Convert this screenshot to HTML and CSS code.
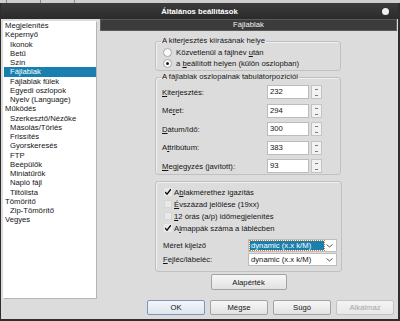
FILE: index.html
```html
<!DOCTYPE html>
<html lang="hu">

<head>
    <meta charset="UTF-8">
    <meta name="viewport" content="width=device-width, initial-scale=1.0">
    <title>Általános beállítások</title>
    <link rel="stylesheet" href="styles.css">
</head>

<body>
    <div class="strip"><span></span><span></span><span></span></div>
    <div class="window">
        <div class="titlebar">
            <span class="title">Általános beállítások</span>
            <span class="close"></span>
        </div>
        <div class="main">
            <ul class="tree">
                <li>Megjelenítés</li>
                <li>Képernyő</li>
                <li class="sub">Ikonok</li>
                <li class="sub">Betű</li>
                <li class="sub">Szín</li>
                <li class="sub on">Fájlablak</li>
                <li class="sub">Fájlablak fülek</li>
                <li class="sub">Egyedi oszlopok</li>
                <li class="sub">Nyelv (Language)</li>
                <li>Működés</li>
                <li class="sub">Szerkesztő/Nézőke</li>
                <li class="sub">Másolás/Törlés</li>
                <li class="sub">Frissítés</li>
                <li class="sub">Gyorskeresés</li>
                <li class="sub">FTP</li>
                <li class="sub">Beépülők</li>
                <li class="sub">Miniatűrök</li>
                <li class="sub">Napló fájl</li>
                <li class="sub">Tiltólista</li>
                <li>Tömörítő</li>
                <li class="sub">Zip-Tömörítő</li>
                <li>Vegyes</li>
            </ul>

            <div class="pane">
                <div class="pane-head">Fájlablak</div>

                <fieldset class="group g1">
                    <legend>A kiterjesztés kiírásának helye</legend>
                    <div class="radio"><span class="dot"></span><span>Közvetlenül a fájlnév <u>u</u>tán</span></div>
                    <div class="radio"><span class="dot on"></span><span>a <u>b</u>eállított helyen (külön oszlopban)</span></div>
                </fieldset>

                <fieldset class="group g2">
                    <legend>A fájlablak oszlopainak tabulátorpozíciói</legend>
                    <div class="field"><span class="label"><u>K</u>iterjesztés:</span><span class="input">232</span><span class="spin"></span></div>
                    <div class="field"><span class="label">Mé<u>r</u>et:</span><span class="input">294</span><span class="spin"></span></div>
                    <div class="field"><span class="label"><u>D</u>átum/Idő:</span><span class="input">300</span><span class="spin"></span></div>
                    <div class="field"><span class="label">A<u>t</u>tribútum:</span><span class="input">383</span><span class="spin"></span></div>
                    <div class="field"><span class="label"><u>M</u>egjegyzés (javított):</span><span class="input">93</span><span class="spin"></span></div>
                </fieldset>

                <fieldset class="group g3">
                    <div class="check"><span class="box on"></span><span>A<u>b</u>lakmérethez igazítás</span></div>
                    <div class="check"><span class="box"></span><span><u>É</u>vszázad jelölése (19xx)</span></div>
                    <div class="check"><span class="box"></span><span><u>1</u>2 órás (a/p) időmegjelenítés</span></div>
                    <div class="check"><span class="box on"></span><span>A<u>l</u>mappák száma a láblécben</span></div>
                    <div class="select-row first"><span class="slabel">Méret kijelző</span><span class="select focus"><span class="value">dynamic (x.x k/M)</span></span></div>
                    <div class="select-row"><span class="slabel"><u>F</u>ejléc/lábeléc:</span><span class="select"><span class="value">dynamic (x.x k/M)</span></span></div>
                </fieldset>

                <div class="defaults"><button class="btn wide">Alapérték</button></div>

                <div class="actions">
                    <button class="btn default">OK</button>
                    <button class="btn">Mégse</button>
                    <button class="btn">Súgó</button>
                    <button class="btn" disabled>Alkalmaz</button>
                </div>
            </div>
        </div>
    </div>
</body>

</html>
```

FILE: styles.css
```css
* {
    margin: 0;
    padding: 0;
    box-sizing: border-box;
}

body {
    width: 400px;
    height: 321px;
    overflow: hidden;
    background: #dcdcdc;
    color: #141414;
    font-family: 'Liberation Sans', Arial, sans-serif;
    font-size: 7.7px;
}

u {
    text-decoration-thickness: 1px;
}

.strip {
    height: 3px;
    display: flex;
    gap: 2px;
    background: #cfcfcf;
}
.strip span {
    width: 26px;
    border-left: 1px solid #8a8a8a;
    margin-left: 6px;
}

.window {
    height: 318px;
    display: flex;
    flex-direction: column;
    border: solid #2e2e2e;
    border-width: 0 2px 2px 1px;
}

.titlebar {
    height: 16px;
    display: grid;
    grid-template-columns: 1fr auto 1fr;
    align-items: center;
    background: linear-gradient(#3c3c3c, #2b2b2b);
    color: #fff;
    font-weight: bold;
}
.title {
    grid-column: 2;
}
.close {
    grid-column: 3;
    justify-self: end;
    width: 7px;
    height: 7px;
    margin-right: 9px;
    border-radius: 50%;
    background: #f0f0f0;
}

.main {
    flex: 1;
    display: flex;
    gap: 4px;
    padding-left: 2px;
}

.tree {
    width: 93px;
    height: 277px;
    margin-top: 2px;
    list-style: none;
    line-height: 9.25px;
    background: #fff;
    box-shadow: 1px 1px 0 #b4b4b4;
}
.tree li {
    padding-left: 2px;
    white-space: nowrap;
}
.tree .sub {
    padding-left: 7px;
}
.tree .on {
    margin-left: 1px;
    padding-left: 6px;
    background: #187fae;
    color: #fff;
}

.pane {
    width: 297px;
    display: flex;
    flex-direction: column;
}
.pane-head {
    height: 12px;
    line-height: 10px;
    text-align: center;
    color: #f4f4f4;
    background: #3b3b3b;
    border: 1px solid #5a5a5a;
}

.group {
    width: 186px;
    margin-left: 55px;
    padding: 0 4px 0 6px;
    border: 1px solid #c0c0c0;
    border-radius: 3px;
    box-shadow: inset 1px 1px 0 #efefef;
}
.group legend {
    padding: 0 1px;
    margin-left: -1px;
    line-height: 10px;
}

.g1 {
    margin-top: 5px;
    padding-top: 1px;
    padding-bottom: 1px;
}
.radio {
    display: flex;
    align-items: center;
    gap: 4px;
    height: 11px;
    padding-left: 1px;
}
.dot {
    width: 9px;
    height: 9px;
    border: 1px solid #a6a6a6;
    border-radius: 50%;
    background: #fbfbfb;
    display: flex;
    align-items: center;
    justify-content: center;
}
.dot.on::after {
    content: "";
    width: 3px;
    height: 3px;
    border-radius: 50%;
    background: #1c1c1c;
}

.g2 {
    margin-top: 1px;
    padding-top: 3px;
    padding-bottom: 1px;
    display: flex;
    flex-direction: column;
    gap: 4.5px;
}
.field {
    display: flex;
    align-items: center;
    height: 14px;
}
.label {
    width: 105px;
}
.input {
    width: 42px;
    height: 14px;
    padding-left: 2px;
    line-height: 12px;
    background: #fff;
    border: 1px solid #bcbcbc;
}
.spin {
    width: 11px;
    height: 14px;
    margin-left: 2px;
    border: 1px solid #c4c4c4;
    background:
        linear-gradient(#7a7a7a, #7a7a7a) 3px 3px / 3px 1px no-repeat,
        linear-gradient(#7a7a7a, #7a7a7a) 3px 9px / 3px 1px no-repeat,
        #f2f2f2;
}

.g3 {
    margin-top: 6px;
    padding-top: 4px;
    padding-bottom: 5px;
}
.check {
    display: flex;
    align-items: center;
    gap: 2px;
    height: 12px;
    padding-left: 2px;
}
.box {
    width: 8px;
    height: 8px;
    background: #e9e9e9;
    border: 1px solid #d6d6d6;
}
.box.on {
    background: #e9e9e9 url("data:image/svg+xml,%3Csvg xmlns='http://www.w3.org/2000/svg' width='8' height='8'%3E%3Cpath d='M1 4l2 2.2L7 1' fill='none' stroke='%23111' stroke-width='1.4'/%3E%3C/svg%3E") center / 8px 8px no-repeat;
    border-color: #e9e9e9;
}

.select-row {
    display: flex;
    align-items: center;
    height: 13px;
    margin-top: 1px;
}
.select-row.first {
    margin-top: 5px;
}
.slabel {
    width: 86px;
    padding-left: 1px;
}
.select {
    width: 89px;
    height: 13px;
    padding: 1px 12px 1px 1px;
    background: #fff url("data:image/svg+xml,%3Csvg xmlns='http://www.w3.org/2000/svg' width='7' height='4'%3E%3Cpath d='M0.5 0.5l3 2.5 3-2.5' fill='none' stroke='%23555' stroke-width='1'/%3E%3C/svg%3E") right 3px center / 7px 4px no-repeat;
    border: 1px solid #bdbdbd;
}
.select .value {
    display: block;
    height: 100%;
    line-height: 9px;
    padding-left: 1px;
}
.select.focus .value {
    background: #187fae;
    color: #fff;
    outline: 1px dotted #d27a2c;
}

.defaults {
    margin-top: 2px;
    display: flex;
    justify-content: center;
}

.btn {
    height: 15px;
    width: 58px;
    font-family: inherit;
    font-size: 7.7px;
    color: #141414;
    border: 1px solid #a3a3a3;
    border-radius: 2px;
    background: linear-gradient(#f7f7f7, #e2e2e2);
}
.btn.wide {
    width: 76px;
    height: 16px;
}
.btn.default {
    border-color: #7d97b4;
    background: linear-gradient(#f3f6fa, #dde6ef);
}
.btn:disabled {
    color: #a6a6a6;
    border-color: #c4c4c4;
    background: linear-gradient(#f4f4f4, #e8e8e8);
}

.actions {
    margin-top: 10px;
    display: flex;
    justify-content: flex-end;
    gap: 5px;
    padding-right: 3px;
}
```
